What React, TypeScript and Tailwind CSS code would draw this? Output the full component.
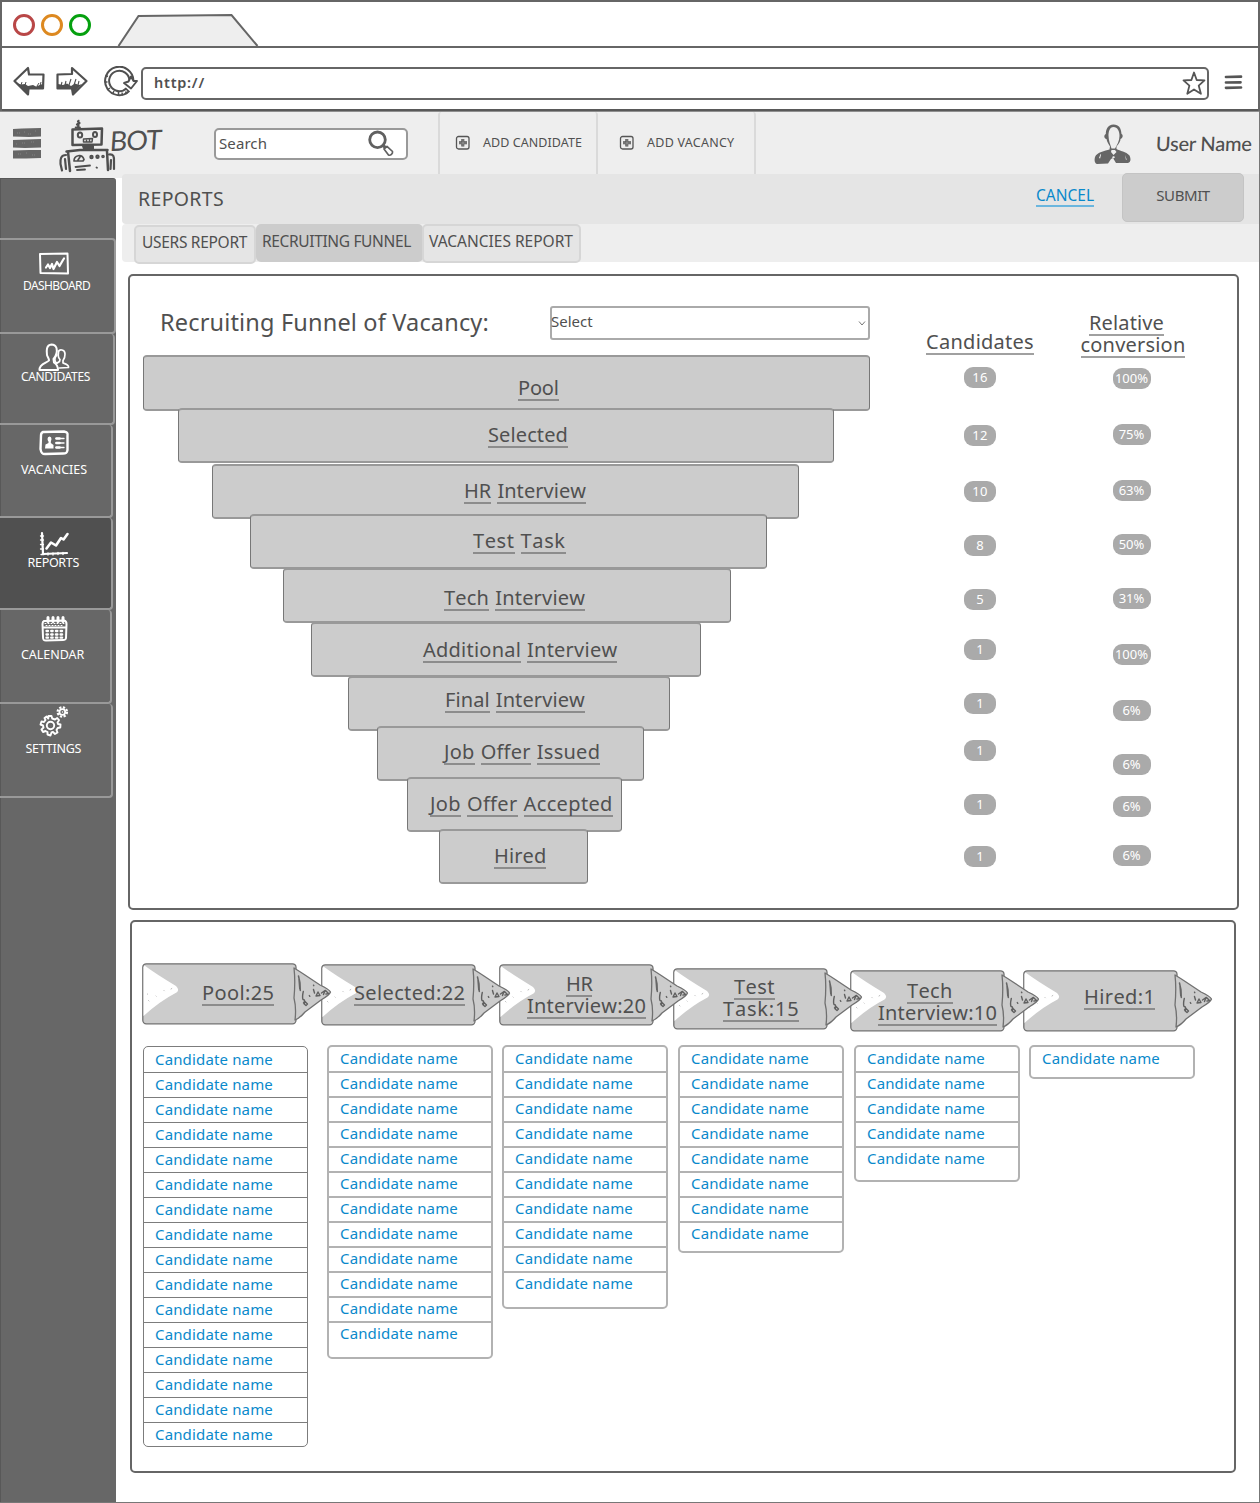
import React from "react";

/* ---------- browser chrome ---------- */

function BackArrow() {
  return (
    <svg width="32" height="30" viewBox="0 0 32 30" fill="none" stroke="#505050" strokeWidth="2.2" strokeLinejoin="round">
      <path d="M1.5 15 L15 2 L16 8.500 L30.500 8.500 L30 22.500 L15.500 22.500 L15 28.500 Z" fill="#fff" />
      <path d="M4 17 L8 18.500 L12 18 L15 20 L20 19 L23 20.500 L29.500 18 L30 22.500 L15.500 22.500 L15 28 Z" fill="#505050" stroke="none" />
      <path d="M24 20 l2-3 M27 20 l1-4 M8 19 l1-3 M12 19 l1-3" strokeWidth="1" />
    </svg>
  );
}

function ForwardArrow() {
  return (
    <svg width="32" height="30" viewBox="0 0 32 30" fill="none" stroke="#505050" strokeWidth="2.2" strokeLinejoin="round">
      <path d="M1.500 8.500 L16 8 L16 2 L30.500 15 L17 28.500 L16 22.500 L1.500 22.500 Z" fill="#fff" />
      <path d="M2 18 L7 19 L11 17.500 L15 20 L19 17.500 L23 19 L26 18 L17 28 L16 22.500 L2 22.500 Z" fill="#505050" stroke="none" />
      <path d="M5 20 l1-4 M9 19 l1-4 M13 19 l2-6 M18 19 l2-6 M22 19 l1-4" strokeWidth="1.100" />
    </svg>
  );
}

function Reload() {
  return (
    <svg width="34" height="32" viewBox="0 0 34 32" fill="none" stroke="#505050" strokeLinejoin="round">
      <path d="M24 23.500 A12.200 12.200 0 1 1 27.500 15" strokeWidth="6" />
      <path d="M22.800 24.700 A12.200 12.200 0 1 1 27.500 14" stroke="#fff" strokeWidth="2" />
      <path d="M14.500 26 v3.500 M10 25 l-1.500 3 M18 26.500 l.5 3 M6 22 l-3 2 M3.500 16 h-3 M21.500 25.500 l1.500 2.500 M4 10.500 l-2.500 -1" strokeWidth="1.500" />
      <path d="M20 17 L24.500 15.500 L27 10.500 L29.500 15 L33 15 L27 22.500 Z" fill="#fff" strokeWidth="1.900" />
    </svg>
  );
}

function Star() {
  return (
    <svg width="24" height="25" viewBox="0 0 24 25" fill="none" stroke="#555" strokeWidth="1.800" strokeLinejoin="round">
      <path d="M12 1.500 L14.700 9 L22.500 9.300 L16.700 14.600 L18.900 22.800 L12 18.500 L5.300 22.800 L7.400 14.600 L1.500 9.300 L9.400 9 Z" />
    </svg>
  );
}

function BrowserChrome() {
  return (
    <div className="h-[111px] border-x-2 border-t-2 border-[#666] bg-white">
      <div className="flex h-[46px] items-start border-b-2 border-[#666]">
        <div className="ml-[11px] mt-[12px] flex gap-[6px]">
          <span className="size-[22px] rounded-full border-[3px] border-[#b94747]" />
          <span className="size-[22px] rounded-full border-[3px] border-[#dd8920]" />
          <span className="size-[22px] rounded-full border-[3px] border-[#05a00f]" />
        </div>
        <svg className="ml-[26px] mt-[11px]" width="144" height="33" viewBox="0 0 144 33">
          <path d="M1.500 33 L21.500 3 L114.500 2 L140.500 33" fill="#eee" stroke="#666" strokeWidth="2" />
        </svg>
      </div>
      <div className="flex h-[63px] items-start border-b-2 border-[#595959]">
        <div className="ml-[11px] mt-[18px]"><BackArrow /></div>
        <div className="ml-[11px] mt-[18px]"><ForwardArrow /></div>
        <div className="ml-[16px] mt-[18px]"><Reload /></div>
        <div className="ml-[3px] mt-[19px] flex h-[33px] w-[1068px] justify-between rounded-[5px] border-2 border-[#666] pl-[11px] pr-px">
          <span className="mt-px text-[14.5px] font-semibold leading-[24px] tracking-[.75px]">http://</span>
          <span className="mt-[2px]"><Star /></span>
        </div>
        <svg className="ml-[14px] mt-[27px]" width="20" height="16" viewBox="0 0 20 16" stroke="#555" strokeWidth="2.700" strokeLinecap="round">
          <path d="M3 2 L18 1.700 M3 7.500 L17.500 7.300 M3 12.800 L18 12.500" />
        </svg>
      </div>
    </div>
  );
}

/* ---------- application header ---------- */

function Burger() {
  return (
    <svg width="28" height="31" viewBox="0 0 28 31" fill="#666">
      <path d="M0 1 L9 .5 L28 0 L28 8.500 L16 9 L0 8.500 Z M0 12 L14 11.500 L28 11 L28 19.500 L12 20 L0 19.500 Z M0 22.500 L16 22 L28 22 L28 30 L13 30.500 L0 30.500 Z" />
      <path d="M4 5 h3 M11 4 h2 M15 6 h4 M22 3 h2 M3 16 h2 M9 15 h3 M18 14 h4 M5 26 h4 M13 25 h2 M19 27 h3" stroke="#8c8c8c" strokeWidth=".8" strokeDasharray="1 1" />
    </svg>
  );
}

function Robot() {
  return (
    <svg width="60" height="54" viewBox="0 0 60 54" fill="none" stroke="#4f4f4f" strokeWidth="2" strokeLinecap="round" strokeLinejoin="round">
      <path d="M20 8.500 l.5-2.500 M19 5.500 l2.500-1.500 M20.500 1.800 l-.5 .8 M17.800 8.500 h4" strokeWidth="2.200" />
      <path d="M14.500 10.500 L44 9.500 L43.500 25.500 L14.500 26 Z" strokeWidth="2.500" />
      <ellipse cx="22" cy="16" rx="2.200" ry="2.500" />
      <ellipse cx="37" cy="15.500" rx="2" ry="2.500" />
      <path d="M25.500 20 L34.500 19.500 L34 23 L25.500 23 Z M28.500 20 v3 M31.500 20 v3" strokeWidth="1.500" />
      <path d="M25 27 L35 27 L35 30 L26 30 Z" fill="#4f4f4f" />
      <path d="M8.500 32.500 L22 31 L49.500 31 M10 32.500 L12 52 M49 32 L50 51" strokeWidth="2.500" />
      <path d="M8 36 C3 36 2 40 2.500 45 L4 51.500 M7 40 L8 50" strokeWidth="2.200" />
      <path d="M51 35.500 C56 35 56 38 56 42 L56 50 M53 41 L52.500 50" strokeWidth="2.200" />
      <path d="M16 42 C16 36 24 34.500 26 40.500 L25 42 Z M20 41 l2-3" strokeWidth="1.700" />
      <circle cx="33.500" cy="38" r="1.200" /><circle cx="39.500" cy="37.800" r="1.200" /><circle cx="45" cy="37.500" r=".8" />
      <path d="M17.500 48 L32 46.500 M19 51 L27 50.500 M38.500 48.500 l.5 .3" strokeWidth="1.800" />
    </svg>
  );
}

function Magnifier() {
  return (
    <svg width="28" height="28" viewBox="0 0 28 28" fill="none" stroke="#606060">
      <circle cx="10.500" cy="9.800" r="7.800" strokeWidth="2.800" />
      <path d="M16 15.500 L19 18" strokeWidth="3" />
      <path d="M17 19 L20 16.300 L25.500 21.500 C26 23.500 23.500 26 21.500 25 Z" strokeWidth="1.700" fill="#fff" strokeLinejoin="round" />
    </svg>
  );
}

function PlusBox() {
  return (
    <svg width="16" height="16" viewBox="0 0 16 16" fill="none" stroke="#555">
      <rect x="1.500" y="1.500" width="12.500" height="12.500" rx="2" strokeWidth="1.300" />
      <path d="M4 7.800 H12 M7.800 4 V11.500" strokeWidth="3" />
      <path d="M4 8 H12 M8 4 V11" strokeWidth=".7" stroke="#aaa" />
    </svg>
  );
}

function Avatar() {
  return (
    <svg width="38" height="41" viewBox="0 0 38 41" fill="#666">
      <path d="M19.500 .5 C13.500 .5 11.800 6 11.800 10 C9.500 11 10 14.500 12.500 15 C13 18 15 21 16 22.500 L15.500 25.500 C11 27 3 28 1 33 C0 37 1 39.500 3 40 L14 39.500 L17 35 L19 34 L22 39 L34 39 C37 38 37 35 35.500 31.500 C32 27.500 26 27 22.500 25 L22.500 22.500 C25 20 26.500 17 26.500 15 C29.500 14 29 10.500 27.500 10 C27 4 25 .5 19.500 .5 Z" />
      <path d="M19.500 3 C15.500 3 14.500 8 14.500 11.500 C14.500 17 16.500 21 17.500 24.500 L21 24.500 C23 21 25.500 17 25.500 12 C25.500 7 23.500 3 19.500 3 Z" fill="#eee" />
      <path d="M17.500 26 L21 26 L22.500 28 L19.500 31 L17 28 Z M18 33 l2-1 l1 1.500 l-2 1 Z M5 34 l1.500-4 l.6 .4 l-1 4 Z M31 31 l1 5 l.7-.4 Z" fill="#eee" />
    </svg>
  );
}

function AppHeader() {
  return (
    <div className="flex h-[67px] items-start border-t border-[#8f8f8f] bg-[#eee]">
      <div className="ml-[13px] mt-[16px]"><Burger /></div>
      <div className="ml-[17px] mt-[7px]"><Robot /></div>
      <span className="-ml-[8px] mt-[11px] w-[57px] -skew-x-6 -rotate-2 font-['Lato'] text-[27px] leading-[34px] tracking-[-1px]">BOT</span>
      <div className="ml-[47px] mt-[16px] flex h-[32px] w-[194px] justify-between rounded-[5px] border-2 border-[#999] bg-white pl-[3px] pr-[11px]">
        <span className="mt-[2px] text-[15px] leading-[22px] tracking-[.09px]">Search</span>
        <span><Magnifier /></span>
      </div>
      <div className="ml-[30px] flex h-[63px] w-[160px] rounded-t-[3px] border-x-2 border-[#dadada] pl-[15px]">
        <span className="mt-[23px]"><PlusBox /></span>
        <span className="ml-[12px] mt-[21px] whitespace-nowrap text-[12.5px] leading-[20px] tracking-[.07px]">ADD CANDIDATE</span>
      </div>
      <div className="flex h-[63px] w-[158px] rounded-tr-[3px] border-r-2 border-[#dadada] pl-[21px]">
        <span className="mt-[23px]"><PlusBox /></span>
        <span className="ml-[12px] mt-[21px] whitespace-nowrap text-[12.5px] leading-[20px] tracking-[.26px]">ADD VACANCY</span>
      </div>
      <div className="ml-[338px] mt-[12px]"><Avatar /></div>
      <span className="ml-[24px] mt-[18px] -skew-x-3 whitespace-nowrap font-['Lato'] text-[20px] font-medium leading-[26px] tracking-[-.2px]">User Name</span>
    </div>
  );
}

/* ---------- sidebar ---------- */

const iconProps = { width: 32, fill: "none", stroke: "#fff", strokeLinecap: "round" as const, strokeLinejoin: "round" as const };

function DashboardIcon() {
  return (
    <svg {...iconProps} height="25" viewBox="0 0 32 25" strokeWidth="2">
      <path d="M2 3 L29.500 2.500 L30 22.500 L2.500 22 Z" />
      <path d="M8 16.500 L10 13.500 L12 17 L14 13 L15.500 18 L19 11 L21.500 15 L25 9 L26 7.500" strokeWidth="2.200" />
    </svg>
  );
}

function CandidatesIcon() {
  return (
    <svg {...iconProps} height="29" viewBox="0 0 32 29" strokeWidth="2">
      <path d="M13.500 1.500 C8 2 8.500 8 9 12 C9.500 14 11 15.500 11 17.500 C9 20 1 21 1.500 27 L20 27 C20 23 19 21.500 16 19.500 L15.500 16 C18 13 19.500 9 18.500 5 C17.500 2.500 16 1.500 13.500 1.500 Z" />
      <path d="M20.500 9 C21 6 27 6 27 11 C27 15 26 16 25 17.500 L25 20 C28 21 31 21.500 30.500 24.500 L21.500 25 M20.500 9.500 C19.800 13 20.500 15 22 16.500 L21.500 18.500 L18.500 20.500 M18.500 12 C16 16 16 18 18.500 20" strokeWidth="1.700" />
    </svg>
  );
}

function VacanciesIcon() {
  return (
    <svg {...iconProps} height="28" viewBox="0 0 32 28" strokeWidth="2.400">
      <path d="M5 3 L26 2.500 C29 3 30 4 29.500 7 L29.500 21 C29 24 28 24.500 25 24.500 L7 25 C3.500 25 3 23 2.500 20 L3 6.500 C3 4 3.500 3.500 5 3 Z" />
      <ellipse cx="11.500" cy="10" rx="2" ry="2.500" fill="#fff" stroke="none" />
      <path d="M7 19.500 L7.500 15.500 L10.500 14 L10.500 11 L13 11 L12.800 14 L15.500 16 L15.500 19.500 Z" fill="#fff" stroke="none" />
      <path d="M18.500 9.500 h7 M18.500 14 h7 M18.500 18.500 h7" strokeWidth="2.600" strokeDasharray="3 4" />
      <path d="M18 9.500 h8 M18 14 h8 M18 18.500 h8" strokeWidth="1.300" />
    </svg>
  );
}

function ReportsIcon() {
  return (
    <svg {...iconProps} height="26" viewBox="0 0 32 26" strokeWidth="1.800">
      <path d="M4 2 L5 23 L29 22" strokeWidth="2.200" />
      <path d="M2.500 5 h3 M2.500 9 h3 M2.500 13.500 h3 M2.500 18 h3 M3 23.500 h3 M10 22 v2 M15 22 v2 M20 21.500 v2 M25 21.500 v2" strokeWidth="1.300" />
      <path d="M8.500 17.500 L13 11.500 L18 14.500 L23 7 L25.500 8.500 L29.500 3" strokeWidth="2.600" />
    </svg>
  );
}

function CalendarIcon() {
  return (
    <svg {...iconProps} height="28" viewBox="0 0 32 28" strokeWidth="2">
      <path d="M6 6 L26 5.500 C28 6 28.500 7 28.500 9 L28 23 C27.500 25 27 25 25 25 L8 25.500 C5.500 25.500 5 25 5 22 L4.500 9 C4.500 7 5 6.500 6 6 Z" />
      <path d="M5 12.500 H28" />
      <path d="M10 2.500 v4 M15 2.500 v4 M20 2.500 v4 M25 2.500 v4" strokeWidth="3" />
      <path d="M8.500 16 h17.500 M8.500 19.500 h17.500 M8.500 22.700 h17.500" strokeWidth="2.300" strokeDasharray="1.500 3.200" />
      <path d="M7 8.500 h19 M8 10.500 h18" strokeWidth="1" strokeDasharray="1 2" />
    </svg>
  );
}

function SettingsIcon() {
  return (
    <svg {...iconProps} height="32" viewBox="0 0 32 32" strokeWidth="1.900">
      <path d="M10.500 11 L13.500 11 L14.200 13.500 L17 14.500 L19.200 13 L21 15.200 L19.500 17.500 L20 19 L22.500 19.500 L22.300 22.500 L19.700 23 L18.500 25 L19.500 27.500 L17 29 L15 27 L13.500 27.500 L12.500 30.500 L9.500 29.500 L9.500 27 L7.500 26 L5 27 L3.500 24.500 L5.500 22.500 L5 20.500 L2.500 19.500 L3.500 16.500 L6 17 L7.500 15 L6.500 13 L8.500 11.500 L10.300 13.500 Z" />
      <circle cx="12.500" cy="20.500" r="3.700" />
      <circle cx="24.300" cy="7" r="4.700" strokeWidth="2.200" strokeLinecap="butt" strokeDasharray="2.200 1.490" />
      <circle cx="24.300" cy="7" r="2.900" strokeWidth="1.800" />
      <circle cx="24.300" cy="7" r=".4" strokeWidth=".6" />
    </svg>
  );
}

const navItems = [
  { label: "DASHBOARD", Icon: DashboardIcon, box: "h-[96px] w-[116px] border-t-2 pt-[11px]", text: "ml-[23px] mt-[2px] text-[12px] tracking-[-.6px]" },
  { label: "CANDIDATES", Icon: CandidatesIcon, box: "h-[91px] w-[115px] pt-[9px]", text: "ml-[21px] -mt-[3px] text-[12px] tracking-[-.35px]" },
  { label: "VACANCIES", Icon: VacanciesIcon, box: "h-[93px] w-[113px] pt-[4px]", text: "ml-[21px] mt-[5px] text-[12.5px]" },
  { label: "REPORTS", Icon: ReportsIcon, box: "h-[92px] w-[113px] bg-[#505050] pt-[13px]", text: "ml-[27.5px] -mt-[2px] text-[12.5px] tracking-[-.3px]" },
  { label: "CALENDAR", Icon: CalendarIcon, box: "h-[94px] w-[112px] pt-[5px]", text: "ml-[21px] mt-[4px] text-[12.5px] tracking-[-.05px]" },
  { label: "SETTINGS", Icon: SettingsIcon, box: "h-[94px] w-[113px] pt-px", text: "ml-[25.5px] mt-[4px] text-[12.5px] tracking-[-.25px]" },
];

function Sidebar() {
  return (
    <nav className="w-[116px] shrink-0 rounded-tr-[3px] border-l border-t border-[#585858] bg-[#676767] pt-[59px]">
      {navItems.map(({ label, Icon, box, text }) => (
        <div key={label} className={"-ml-px rounded-r-[4px] border-b-2 border-r-2 border-[#999] text-white " + box}>
          <div className="ml-[38px]"><Icon /></div>
          <div className={"leading-[16px] " + text}>{label}</div>
        </div>
      ))}
    </nav>
  );
}

/* ---------- shared text ---------- */

function Underlined({ text, className = "" }: { text: string; className?: string }) {
  return (
    <span className={"flex gap-[6px] whitespace-nowrap text-[20px] leading-[22px] [font-kerning:none] " + className}>
      {text.split(" ").map((word) => (
        <span key={word} className="border-b-2 border-inherit">{word}</span>
      ))}
    </span>
  );
}

/* ---------- page title and tabs ---------- */

function TitleBar() {
  return (
    <div className="flex h-[50px] items-start rounded-l-[4px] bg-[#e5e5e5]">
      <h1 className="ml-[16px] mt-[12px] w-[898px] text-[19.5px] leading-[26px] tracking-[.33px]">REPORTS</h1>
      <a className="mt-[11px] border-b-2 border-[#6bb6de] text-[15.5px] leading-[20px] text-[#0a89cb]">CANCEL</a>
      <button className="-mt-px ml-[28px] flex h-[49px] w-[122px] justify-center rounded-[5px] border border-[#c4c4c4] bg-[#ccc] pt-[10px] text-[15px] leading-[22px] tracking-[-.4px]">
        SUBMIT
      </button>
    </div>
  );
}

function Tabs() {
  return (
    <div className="flex h-[38px] items-start rounded-l-[4px] bg-[#eee] pl-[12px] text-[15.5px] leading-[22px]">
      <div className="mt-px h-[39px] w-[122px] whitespace-nowrap rounded-[5px] border-2 border-[#d6d6d6] bg-[#e5e5e5] pl-[6px] pt-[4px] tracking-[-.3px]">USERS REPORT</div>
      <div className="h-[38px] w-[167px] whitespace-nowrap rounded-[5px] bg-[#ccc] pl-[6px] pt-[6px] tracking-[-.35px]">RECRUITING FUNNEL</div>
      <div className="-ml-px h-[39px] w-[159px] whitespace-nowrap rounded-[5px] border-2 border-[#d6d6d6] bg-[#e5e5e5] pl-[5px] pt-[4px]">VACANCIES REPORT</div>
    </div>
  );
}

/* ---------- funnel ---------- */

const funnel = [
  { name: "Pool", bar: "h-[56px] ml-[13px] w-[727px] pl-[374px] pt-[20px]", text: "tracking-[-.2px]" },
  { name: "Selected", bar: "-mt-[3px] h-[55px] ml-[48px] w-[656px] pl-[309px] pt-[14px]", text: "tracking-[.11px]" },
  { name: "HR Interview", bar: "mt-px h-[55px] ml-[82px] w-[587px] pl-[251px] pt-[14px]", text: "tracking-[.05px]" },
  { name: "Test Task", bar: "-mt-[5px] h-[55px] ml-[120px] w-[517px] pl-[222px] pt-[14px]", text: "tracking-[.6px]" },
  { name: "Tech Interview", bar: "-mt-px h-[55px] ml-[153px] w-[448px] pl-[160px] pt-[17px]", text: "tracking-[.2px]" },
  { name: "Additional Interview", bar: "-mt-px h-[55px] ml-[181px] w-[390px] pl-[111px] pt-[15px]", text: "tracking-[.23px]" },
  { name: "Final Interview", bar: "-mt-px h-[55px] ml-[218px] w-[322px] pl-[96px] pt-[11px]", text: "tracking-[.1px]" },
  { name: "Job Offer Issued", bar: "-mt-[5px] h-[55px] ml-[247px] w-[267px] pl-[66px] pt-[13px]", text: "tracking-[.25px]" },
  { name: "Job Offer Accepted", bar: "-mt-[4px] h-[55px] ml-[277px] w-[215px] pl-[22px] pt-[14px]", text: "tracking-[.35px]" },
  { name: "Hired", bar: "-mt-[3px] h-[55px] ml-[309px] w-[149px] pl-[54px] pt-[14px]", text: "tracking-[.12px]" },
];

const candidateCounts = [
  { value: "16", gap: "mt-[12px]" },
  { value: "12", gap: "mt-[37px]" },
  { value: "10", gap: "mt-[35px]" },
  { value: "8", gap: "mt-[33px]" },
  { value: "5", gap: "mt-[33px]" },
  { value: "1", gap: "mt-[29px]" },
  { value: "1", gap: "mt-[33px]" },
  { value: "1", gap: "mt-[26px]" },
  { value: "1", gap: "mt-[33px]" },
  { value: "1", gap: "mt-[31px]" },
];

const conversions = [
  { value: "100%", gap: "mt-[10px]" },
  { value: "75%", gap: "mt-[35px]" },
  { value: "63%", gap: "mt-[35px]" },
  { value: "50%", gap: "mt-[33px]" },
  { value: "31%", gap: "mt-[33px]" },
  { value: "100%", gap: "mt-[35px]" },
  { value: "6%", gap: "mt-[35px]" },
  { value: "6%", gap: "mt-[33px]" },
  { value: "6%", gap: "mt-[21px]" },
  { value: "6%", gap: "mt-[28px]" },
];

function FunnelPanel() {
  return (
    <section className="ml-[6px] mt-[12px] flex h-[636px] w-[1111px] rounded-[5px] border-2 border-[#666] bg-white">
      <div className="w-[740px] shrink-0 pt-[30px]">
        <div className="mb-[16px] flex h-[33px] items-start justify-between pl-[30px]">
          <h2 className="mt-[2px] whitespace-nowrap text-[23.5px] leading-[28px] tracking-[.17px]">Recruiting Funnel of Vacancy:</h2>
          <div className="flex h-[34px] w-[320px] justify-between rounded-[3px] border-2 border-[#aaa] pr-[2px]">
            <span className="-ml-px mt-[3px] text-[15px] leading-[20px]">Select</span>
            <svg className="mt-[12px]" width="8" height="7" viewBox="0 0 8 7" fill="none" stroke="#777">
              <path d="M1 1.500 L4 5 L7 1.500" />
            </svg>
          </div>
        </div>
        {funnel.map((stage) => (
          <div key={stage.name} className={"relative rounded-[4px] border-x border-y-2 border-x-[#777] border-y-[#999] bg-[#ccc] " + stage.bar}>
            <Underlined text={stage.name} className={"border-[#8c8c8c] " + stage.text} />
          </div>
        ))}
      </div>
      <div className="ml-[55px] flex w-[110px] flex-col items-center pt-[55px]">
        <Underlined text="Candidates" className="border-[#a0a0a0] tracking-[.25px]" />
        {candidateCounts.map((c, i) => (
          <span key={i} className={"flex h-[21px] w-[32px] justify-center rounded-[9px] bg-[#aaa] text-[13px] leading-[20px] tracking-[.3px] text-white " + c.gap}>{c.value}</span>
        ))}
      </div>
      <div className="ml-[45px] flex w-[106px] flex-col items-center pt-[36px]">
        <Underlined text="Relative" className="mr-[13px] border-[#a0a0a0] tracking-[.13px]" />
        <Underlined text="conversion" className="-mt-[2px] border-[#a0a0a0] tracking-[.2px]" />
        {conversions.map((c, i) => (
          <span key={i} className={"ml-[-3px] flex h-[21px] w-[38px] justify-center rounded-[9px] bg-[#aaa] text-[13px] leading-[20px] text-white " + c.gap}>{c.value}</span>
        ))}
      </div>
    </section>
  );
}

/* ---------- pipeline ---------- */

function PencilArrow() {
  return (
    <svg className="col-start-1 row-start-1 overflow-visible" width="190" height="62" viewBox="0 0 190 62" fill="none" stroke="#707070" strokeWidth="1.300" strokeLinejoin="round" strokeLinecap="round">
      <rect x=".8" y=".8" width="153.200" height="60" rx="3.500" fill="#ccc" />
      <path d="M2.500 2.500 Q14 11 34 23 Q38 27 34.500 29.500 Q18 38 1.500 53 L1.500 4 Z" fill="#fff" stroke="none" />
      <path d="M6.500 37.500 l.5 .5 M22 27.500 l.3 .3 M29 26 l.8 -.5 M14 33 l.2 .2 M5.500 31 v.2" strokeWidth="1" stroke="#bbb" />
      <path d="M152 5 Q157 8 163 12 L178 22 Q187 26 188.500 29 Q187.500 32 179 37 L163 49 Q158 55 153 57 Q154.500 45 152 35 Q153.500 18 152 5 Z" fill="#ccc" />
      <path d="M156.500 13 L158 20 L158.300 27.500 M157 16 L157.800 26" strokeWidth="1.500" stroke="#666" />
      <path d="M161.300 28.500 Q160 34 161 36.500 Q164 37 161.500 40 M163 38.500 l2.500 2.500 l-1.500 1.500 l-1.800 -1.500 Z M167.300 32.500 l.5 .8 M171.500 22.200 l.3 .5 M171.500 26.500 L172.500 30 M174 33 L176 29 L178 32.500 Z M179.500 30 L183 27.500 L181.500 31.500 M183.500 27.500 L186.500 30.500 L184 31" strokeWidth="1.400" stroke="#606060" />
    </svg>
  );
}

const stages = [
  { z: "z-[6] w-[179px] mt-[41px]", pad: "pt-[19px]", lines: [{ text: "Pool:25", cls: "ml-[60px] border-[#8c8c8c] tracking-[.38px]" }] },
  { z: "z-[5] w-[178px] mt-[42px]", pad: "pt-[18px]", lines: [{ text: "Selected:22", cls: "ml-[33px] border-[#8c8c8c] tracking-[.36px]" }] },
  { z: "z-[4] w-[174px] mt-[42px]", pad: "pt-[9px]", lines: [{ text: "HR", cls: "ml-[67px] border-[#8c8c8c] tracking-[-.4px]" }, { text: "Interview:20", cls: "-mt-[2px] ml-[28px] border-[#8c8c8c] tracking-[.22px]" }] },
  { z: "z-[3] w-[177px] mt-[46px]", pad: "pt-[8px]", lines: [{ text: "Test", cls: "ml-[61px] border-[#8c8c8c] tracking-[.4px]" }, { text: "Task:15", cls: "-mt-[2px] ml-[50px] border-[#8c8c8c] tracking-[.8px]" }] },
  { z: "z-[2] w-[173px] mt-[48px]", pad: "pt-[10px]", lines: [{ text: "Tech", cls: "ml-[57px] border-[#8c8c8c] tracking-[.35px]" }, { text: "Interview:10", cls: "-mt-[2px] ml-[28px] border-[#8c8c8c] tracking-[.22px]" }] },
  { z: "z-[1] w-[190px] mt-[48px]", pad: "pt-[16px]", lines: [{ text: "Hired:1", cls: "ml-[61px] border-[#8c8c8c] tracking-[.38px]" }] },
];

const lists = [
  { count: 16, fine: true, box: "mt-px h-[401px] w-[165px]" },
  { count: 12, fine: false, box: "ml-[19px] h-[314px] w-[166px]" },
  { count: 10, fine: false, box: "ml-[9px] h-[264px] w-[166px]" },
  { count: 8, fine: false, box: "ml-[10px] h-[208px] w-[166px]" },
  { count: 5, fine: false, box: "ml-[10px] h-[137px] w-[166px]" },
  { count: 1, fine: false, box: "ml-[9px] h-[34px] w-[166px]" },
];

function CandidateList({ count, fine, box }: { count: number; fine: boolean; box: string }) {
  return (
    <ul className={"overflow-hidden rounded-[5px] pt-px " + (fine ? "border border-[#7c7c7c] " : "border-2 border-[#b2b2b2] ") + box}>
      {Array.from({ length: count }, (_, i) => (
        <li
          key={i}
          className={
            "h-[25px] whitespace-nowrap text-[15px] tracking-[.15px] text-[#0a89cb] " +
            (fine ? "border-[#7c7c7c] pl-[11px] leading-[23px] " : "border-[#b2b2b2] pl-[11px] leading-[21px] ") +
            (i === count - 1 ? "" : fine ? "border-b" : "border-b-2")
          }
        >
          Candidate name
        </li>
      ))}
    </ul>
  );
}

function PipelinePanel() {
  return (
    <section className="ml-[8px] mt-[10px] h-[553px] w-[1106px] rounded-[5px] border-2 border-[#666] bg-white">
      <div className="flex h-[123px] items-start pl-[10px]">
        {stages.map((s, i) => (
          <div key={i} className={"relative grid shrink-0 " + s.z}>
            <PencilArrow />
            <div className={"z-10 col-start-1 row-start-1 flex flex-col items-start " + s.pad}>
              {s.lines.map((l) => (
                <Underlined key={l.text} text={l.text} className={l.cls} />
              ))}
            </div>
          </div>
        ))}
      </div>
      <div className="flex items-start pl-[11px]">
        {lists.map((l, i) => (
          <CandidateList key={i} {...l} />
        ))}
      </div>
    </section>
  );
}

export default function App() {
  return (
    <div className="flex h-[1503px] w-[1260px] flex-col overflow-hidden bg-white font-['Noto_Sans',sans-serif] text-[#505050]">
      <BrowserChrome />
      <div className="flex min-h-0 flex-1 flex-col border-b border-r border-[#777]">
        <AppHeader />
        <div className="flex min-h-0 flex-1">
          <Sidebar />
          <main className="-mt-[4px] ml-[6px] flex-1">
            <TitleBar />
            <Tabs />
            <FunnelPanel />
            <PipelinePanel />
          </main>
        </div>
      </div>
    </div>
  );
}
